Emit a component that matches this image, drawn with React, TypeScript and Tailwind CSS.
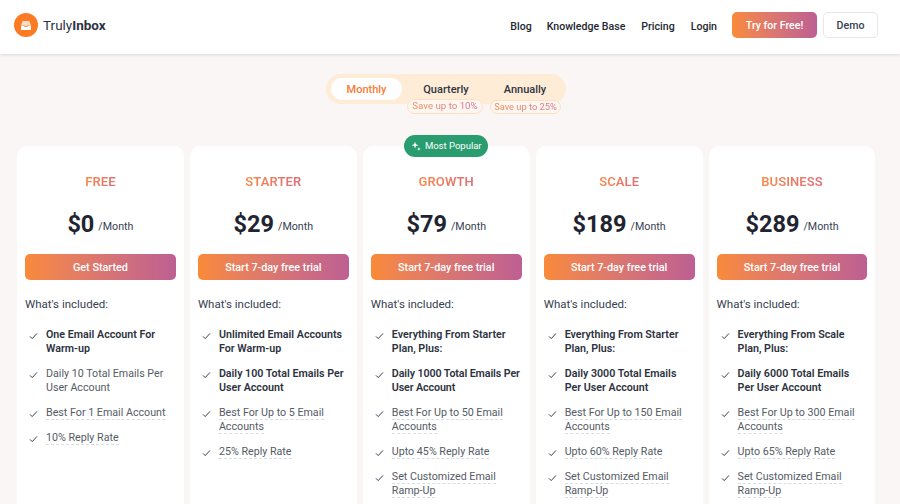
import React from "react";

type Feature = { text: string; bold?: boolean; dashed?: boolean; tight?: boolean };
type Plan = { name: string; price: string; cta: string; popular?: boolean; features: Feature[] };

const plans: Plan[] = [
  {
    name: "FREE",
    price: "$0",
    cta: "Get Started",
    features: [
      { text: "One Email Account For Warm-up", bold: true },
      { text: "Daily 10 Total Emails Per User Account" },
      { text: "Best For 1 Email Account", dashed: true },
      { text: "10% Reply Rate", dashed: true },
    ],
  },
  {
    name: "STARTER",
    price: "$29",
    cta: "Start 7-day free trial",
    features: [
      { text: "Unlimited Email Accounts For Warm-up", bold: true },
      { text: "Daily 100 Total Emails Per User Account", bold: true },
      { text: "Best For Up to 5 Email Accounts", dashed: true },
      { text: "25% Reply Rate", dashed: true },
    ],
  },
  {
    name: "GROWTH",
    price: "$79",
    cta: "Start 7-day free trial",
    popular: true,
    features: [
      { text: "Everything From Starter Plan, Plus:", bold: true },
      { text: "Daily 1000 Total Emails Per User Account", bold: true, tight: true },
      { text: "Best For Up to 50 Email Accounts", dashed: true },
      { text: "Upto 45% Reply Rate", dashed: true },
      { text: "Set Customized Email Ramp-Up", dashed: true },
    ],
  },
  {
    name: "SCALE",
    price: "$189",
    cta: "Start 7-day free trial",
    features: [
      { text: "Everything From Starter Plan, Plus:", bold: true },
      { text: "Daily 3000 Total Emails Per User Account", bold: true },
      { text: "Best For Up to 150 Email Accounts", dashed: true },
      { text: "Upto 60% Reply Rate", dashed: true },
      { text: "Set Customized Email Ramp-Up", dashed: true },
    ],
  },
  {
    name: "BUSINESS",
    price: "$289",
    cta: "Start 7-day free trial",
    features: [
      { text: "Everything From Scale Plan, Plus:", bold: true },
      { text: "Daily 6000 Total Emails Per User Account", bold: true },
      { text: "Best For Up to 300 Email Accounts", dashed: true },
      { text: "Upto 65% Reply Rate", dashed: true },
      { text: "Set Customized Email Ramp-Up", dashed: true },
    ],
  },
];

function Logo() {
  return (
    <div className="flex h-6 w-6 items-center justify-center rounded-full bg-[#fb7a24]">
      <svg width="12" height="11" viewBox="0 0 12 11" fill="none">
        <path d="M2.6 1h6.8l1.4 4H8L7.2 6H4.8L4 5H1.2z" fill="#fff" opacity="0.75" />
        <path d="M1 5.6h2.7l.8 1.1h3l.8-1.1H11V10H1z" fill="#fff" />
      </svg>
    </div>
  );
}

function Check() {
  return (
    <svg width="9" height="8" viewBox="0 0 9 8" fill="none" className="mt-[4px] shrink-0">
      <path d="M1 4.4 3.2 6.6 8 1.4" stroke="#374151" strokeWidth="1" />
    </svg>
  );
}

function Sparkle() {
  return (
    <svg width="10" height="10" viewBox="0 0 10 10" fill="#fff">
      <path d="M4 .8 4.9 3.3 7.4 4.2 4.9 5.1 4 7.6 3.1 5.1 .6 4.2 3.1 3.3z" />
      <path d="M7.9 6.2 8.4 7.6 9.8 8.1 8.4 8.6 7.9 10 7.4 8.6 6 8.1 7.4 7.6z" />
    </svg>
  );
}

function PlanCard({ plan }: { plan: Plan }) {
  return (
    <div className="relative flex h-[400px] flex-col rounded-[10px] bg-white px-2 pt-[28px]">
      {plan.popular && (
        <div className="absolute left-1/2 top-[-11px] flex h-[22px] w-[84px] -translate-x-1/2 items-center justify-center gap-[4px] rounded-full bg-[#2a9d70] text-[9.5px] text-white">
          <Sparkle />
          Most Popular
        </div>
      )}
      <div className="mx-auto w-fit bg-gradient-to-r from-[#f98a48] to-[#dd6f78] bg-clip-text text-center text-[13px] font-semibold leading-[16px] tracking-[0.1px] text-transparent">
        {plan.name}
      </div>
      <div className="mt-[18px] flex h-[32px] items-center justify-center gap-[4px] text-[#1f2430]">
        <span className="text-[23.5px] font-bold leading-[32px]">{plan.price}</span>
        <span className="mt-[7px] text-[10.7px] text-[#374151]">/Month</span>
      </div>
      <div className="mt-[14px] flex h-[26px] items-center justify-center rounded-[5px] bg-gradient-to-r from-[#f98a38] to-[#bd5f92] pt-[2px] text-[10.8px] font-medium text-white">
        {plan.cta}
      </div>
      <div className="mt-[17px] text-[11.5px] leading-[14px] text-[#374151]">What's included:</div>
      <ul className="mt-[17px] flex flex-col gap-[11px]">
        {plan.features.map((f) => (
          <li key={f.text} className="flex gap-[8px] pl-[4px] text-[10.7px] leading-[14px]">
            <Check />
            <span
              className={
                (f.bold ? "font-semibold text-[#2c3240]" : "text-[#555b66]") + (f.tight ? " tracking-[-0.1px]" : "")
              }
            >
              {f.dashed ? (
                <span className="border-b border-dashed border-[#d9dce1]">{f.text}</span>
              ) : (
                f.text
              )}
            </span>
          </li>
        ))}
      </ul>
    </div>
  );
}

export default function App() {
  return (
    <div className="h-[504px] w-[900px] overflow-hidden bg-[#f9f6f5] font-['Roboto','Liberation_Sans',sans-serif]">
      <header className="flex h-[54px] items-center justify-between bg-white pb-[4px] pl-[14px] pr-[22px] shadow-[0_1px_3px_rgba(0,0,0,0.12)]">
        <div className="flex items-center gap-[5px]">
          <Logo />
          <span className="text-[13.5px] text-[#2c3242]">
            Truly<span className="font-bold">Inbox</span>
          </span>
        </div>
        <nav className="flex items-center text-[10.6px] font-medium text-[#23272f]">
          <span className="pt-[3px]">Blog</span>
          <span className="ml-[15px] pt-[3px]">Knowledge Base</span>
          <span className="ml-[16px] pt-[3px]">Pricing</span>
          <span className="ml-[16px] pt-[3px]">Login</span>
          <span className="ml-[15px] flex h-[26px] w-[85px] items-center justify-center rounded-[5px] bg-gradient-to-r from-[#f98a38] to-[#bd5f92] pt-[2px] text-white">
            Try for Free!
          </span>
          <span className="ml-[6px] flex h-[26px] w-[55px] items-center justify-center rounded-[5px] border border-[#e5e7eb] pt-[2px] text-[#374151]">
            Demo
          </span>
        </nav>
      </header>

      <div className="flex justify-center pr-[8px] pt-[20px]">
        <div className="relative flex h-[30px] w-[240px] items-center rounded-full bg-[#feecd7] pl-[5px] text-[11px] font-medium text-[#2f3542]">
          <span className="flex h-[22px] w-[71px] items-center justify-center rounded-full bg-white pt-[2px] text-[#f97b35]">
            Monthly
          </span>
          <span className="ml-[12px] w-[64px] pt-[3px] text-center">Quarterly</span>
          <span className="ml-[18px] w-[58px] pt-[3px] text-center">Annually</span>
          <span className="absolute left-[81px] top-[25px] flex h-[15px] w-[76px] items-center justify-center rounded-full border border-[#fde0c2] bg-[#fdf6f1] text-[9.7px] font-normal">
            <span className="bg-gradient-to-r from-[#f98a48] to-[#d66f92] bg-clip-text text-transparent">Save up to 10%</span>
          </span>
          <span className="absolute left-[164px] top-[26px] flex h-[14px] w-[71px] items-center justify-center rounded-full border border-[#fde0c2] bg-[#fdf6f1] text-[9.3px] font-normal">
            <span className="bg-gradient-to-r from-[#f98a48] to-[#d66f92] bg-clip-text text-transparent">Save up to 25%</span>
          </span>
        </div>
      </div>

      <div className="mt-[42px] grid grid-cols-5 gap-[6px] pl-[17px] pr-[24.5px]">
        {plans.map((p) => (
          <PlanCard key={p.name} plan={p} />
        ))}
      </div>
    </div>
  );
}
